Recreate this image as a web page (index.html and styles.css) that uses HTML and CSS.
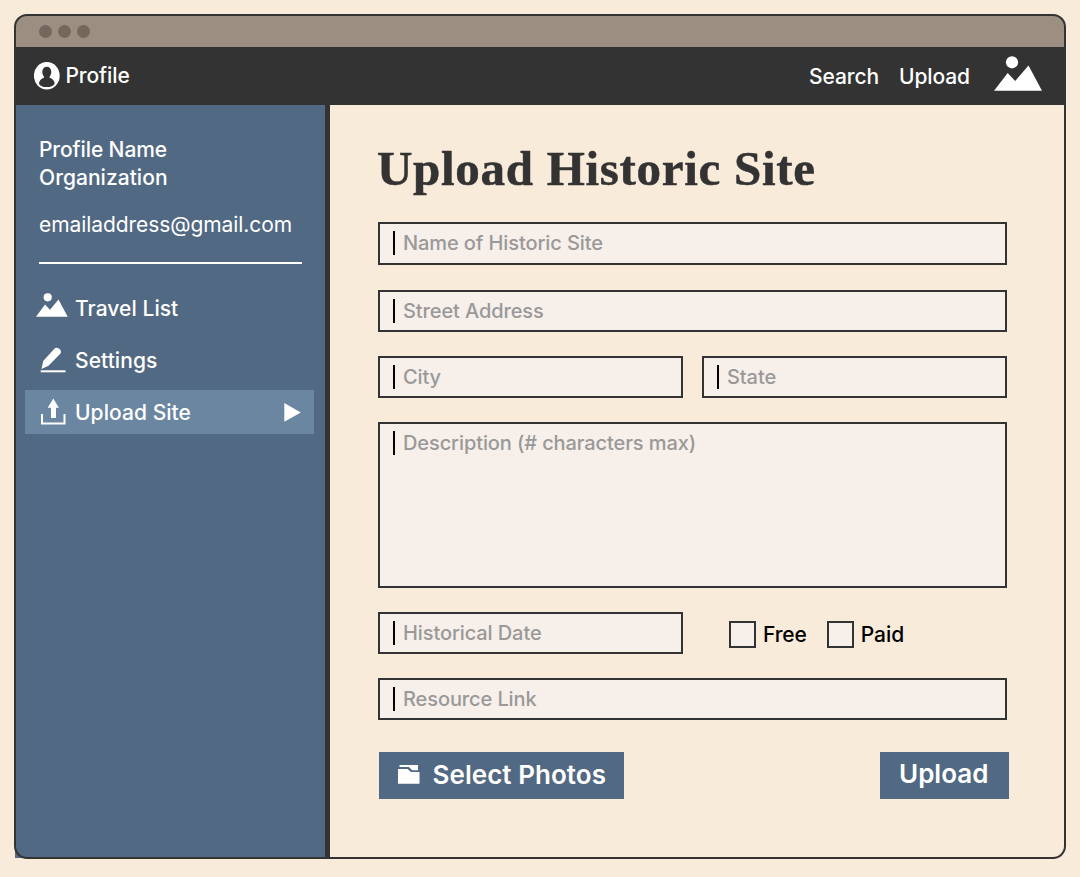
FILE: index.html
```html
<!DOCTYPE html>
<html lang="en">
<head>
<meta charset="utf-8">
<title>Upload Historic Site</title>
<link rel="stylesheet" href="styles.css">
</head>
<body>
<div class="window">
  <div class="titlebar"><i class="dot"></i><i class="dot"></i><i class="dot"></i></div>
  <header class="nav">
    <a class="profile">
      <svg class="avatar" width="26" height="28" viewBox="0 0 26 28"><ellipse cx="12.800" cy="13.800" rx="12.900" ry="13.800" fill="#fff"/><path d="M12.800 4.800c-2.700 0-4.500 2-4.500 5 0 2 .7 3.800 1.700 4.900v1c-2.600.8-4.600 2.600-5 5.200 0 2.700 4 4.200 7.800 4.200s7.800-1.500 7.800-4.200c-.4-2.600-2.400-4.400-5-5.200v-1c1-1.100 1.700-2.900 1.700-4.900 0-3-1.800-5-4.500-5z" fill="#333"/></svg>
      <span class="t-profile">Profile</span>
    </a>
    <nav class="links">
      <a class="t-search">Search</a>
      <a class="t-upload">Upload</a>
      <svg class="brand" width="48" height="35" viewBox="0 0 48 35" fill="#fff"><circle cx="18" cy="6.300" r="6.100"/><path d="M0 34.700 13.700 17l7.500 8L34.500 9.500 48 34.700z"/></svg>
    </nav>
  </header>
  <div class="body">
    <aside class="sidebar">
      <p class="who"><span class="t-name">Profile Name</span><br><span class="t-org">Organization</span></p>
      <p class="email"><span class="t-mail">emailaddress@gmail.com</span></p>
      <hr class="rule">
      <ul class="menu">
        <li class="item">
          <svg class="ico" width="32" height="24" viewBox="0 0 32 24" fill="#fff"><circle cx="11.700" cy="4.300" r="4.100"/><path d="M0 23.700 9 11.500l5 5.300L22.500 6.500 31.700 23.700z"/></svg>
          <span class="t-travel">Travel List</span>
        </li>
        <li class="item">
          <svg class="ico" width="32" height="26" viewBox="0 0 32 26" fill="#fff"><path d="M5.500 22l1.700-8L18.600 1.500q1.900-1.800 4.600.3t1.300 4.700L12.500 18.800z"/><path d="M4.700 23.300h24.800v2H4.700z"/></svg>
          <span class="t-settings">Settings</span>
        </li>
        <li class="item active">
          <svg class="ico" width="32" height="26" viewBox="0 0 32 26"><path d="M17.300-.5l5.600 9.200H20v10.200h-5V8.700h-3.300z" fill="#fff"/><path d="M6 15v9.400h22.500V15" fill="none" stroke="#fff" stroke-width="2"/></svg>
          <span class="t-site">Upload Site</span>
          <svg class="arrow" width="17" height="19" viewBox="0 0 17 19"><path d="M0.300 0l16.500 9.400L0.300 18.700z" fill="#fff"/></svg>
        </li>
      </ul>
    </aside>
    <main class="main">
      <h1 class="title"><span class="t-title">Upload Historic Site</span></h1>
      <form class="form">
        <div class="field first"><i class="caret"></i><span>Name of Historic Site</span></div>
        <div class="field street"><i class="caret"></i><span>Street Address</span></div>
        <div class="row">
          <div class="field half"><i class="caret"></i><span>City</span></div>
          <div class="field half"><i class="caret"></i><span>State</span></div>
        </div>
        <div class="field area"><i class="caret"></i><span>Description (# characters max)</span></div>
        <div class="row">
          <div class="field half"><i class="caret"></i><span>Historical Date</span></div>
          <div class="checks">
            <label class="check"><i class="box"></i><span class="t-free">Free</span></label>
            <label class="check"><i class="box"></i><span class="t-paid">Paid</span></label>
          </div>
        </div>
        <div class="field"><i class="caret"></i><span>Resource Link</span></div>
      </form>
      <div class="actions">
        <button class="btn select">
          <svg class="folder" width="22" height="19" viewBox="0 0 22 19" fill="#fff"><path d="M1.500 0H20v5.300h-5.700L10.800 2H1.500z"/><path d="M0 4h9.500l3.500 3h8.500v11.700H0z"/></svg>
          <span class="t-select">Select Photos</span>
        </button>
        <button class="btn send"><span class="t-send">Upload</span></button>
      </div>
    </main>
  </div>
</div>
</body>
</html>
```
FILE: styles.css
```css
* { box-sizing: border-box; }
body {
  margin: 0;
  height: 877px;
  padding: 14px 14px 0;
  background: #f8ebda;
  font-family: Inter, "Liberation Sans", sans-serif;
  font-size: 21px;
  font-weight: 500;
  letter-spacing: -0.1px;
  color: #fff;
  overflow: hidden;
}
p, h1, ul { margin: 0; padding: 0; }
span, a { white-space: nowrap; }
.window {
  position: relative;
  width: 1052px;
  height: 845px;
  padding: 1px;
  display: flex;
  flex-direction: column;
}
/* outline sits over the panels so the corner arc stays visible */
.window::after {
  content: "";
  position: absolute;
  inset: 0;
  border: 2px solid #333;
  border-radius: 13px;
  pointer-events: none;
}
.titlebar {
  height: 32px;
  flex: none;
  display: flex;
  gap: 6px;
  padding: 9.6px 0 0 23.600px;
  background: #9c8e81;
  border-radius: 12px 12px 0 0;
}
.dot { width: 13px; height: 13px; border-radius: 50%; background: #73675e; }
.nav {
  height: 58px;
  flex: none;
  display: flex;
  justify-content: space-between;
  background: #333;
}
.profile { display: flex; padding: 15px 0 0 19px; }
.avatar { margin-right: 5.500px; }
.t-profile { line-height: 28px; }
.links { display: flex; padding: 9px 23px 0 0; }
.links a { line-height: 28px; padding-top: 7px; margin-right: 20px; }
.links .t-upload { margin-right: 24px; }
.body { flex: 1; display: flex; }
.sidebar {
  width: 315px;
  flex: none;
  border-right: 5px solid #333;
  background: #526983;
  padding: 31px 11px 0 10px;
}
.who, .email { line-height: 28px; padding-left: 14px; }
.t-org { letter-spacing: 0.040px; }
.email { margin-top: 19px; font-weight: 400; letter-spacing: -0.070px; }
.rule { width: 263px; height: 2px; border: 0; margin: 23px 0 0 14px; background: #fff; }
.menu { list-style: none; margin-top: 22px; letter-spacing: 0.060px; }
.item { height: 44px; margin-bottom: 8px; display: flex; align-items: center; padding-left: 11px; }
.ico { margin-right: 7px; overflow: visible; }
.item:first-child .ico { margin-bottom: 6px; }
.active { background: #6a86a1; padding-right: 13px; }
.arrow { margin-left: auto; }
.main { flex: 1; padding: 34px 58px 0 48px; }
.title {
  height: 60px;
  margin-left: -1px;
  font: bold 49px/60px "Liberation Serif", serif;
  letter-spacing: 0.700px;
  -webkit-text-stroke: 0.5px #333;
  color: #333;
}
.form { margin-top: 23px; width: 629px; color: #999; font-size: 20px; display: grid; row-gap: 24px; }
.field {
  height: 42px;
  border: 2px solid #333;
  background: #f7efe9;
  display: flex;
  gap: 8px;
  padding: 7px 0 0 13px;
  line-height: 24px;
}
.field.first { height: 43px; margin-bottom: 1px; }
.caret { width: 2px; height: 24px; background: #000; }
.row { display: flex; justify-content: space-between; }
.half { width: 305px; }
.area { height: 166px; }
.checks { display: flex; gap: 20px; width: 278px; padding-top: 9px; color: #000; font-size: 21px; }
.check { display: flex; gap: 7px; line-height: 28px; }
.box { width: 27px; height: 27px; border: 2px solid #333; background: #f7efe9; }
.actions { margin-top: 32px; width: 631px; padding-left: 1px; display: flex; justify-content: space-between; }
.btn {
  height: 47px;
  border: 0;
  border-radius: 0;
  background: #526983;
  color: #fff;
  font: 600 26px/46px Inter, "Liberation Sans", sans-serif;
  padding: 0 0 0 19px;
  display: flex;
}
.select { width: 245px; letter-spacing: 0.050px; }
.send { width: 129px; line-height: 44px; }
.folder { margin: 13px 12.500px 0 0; }
```
